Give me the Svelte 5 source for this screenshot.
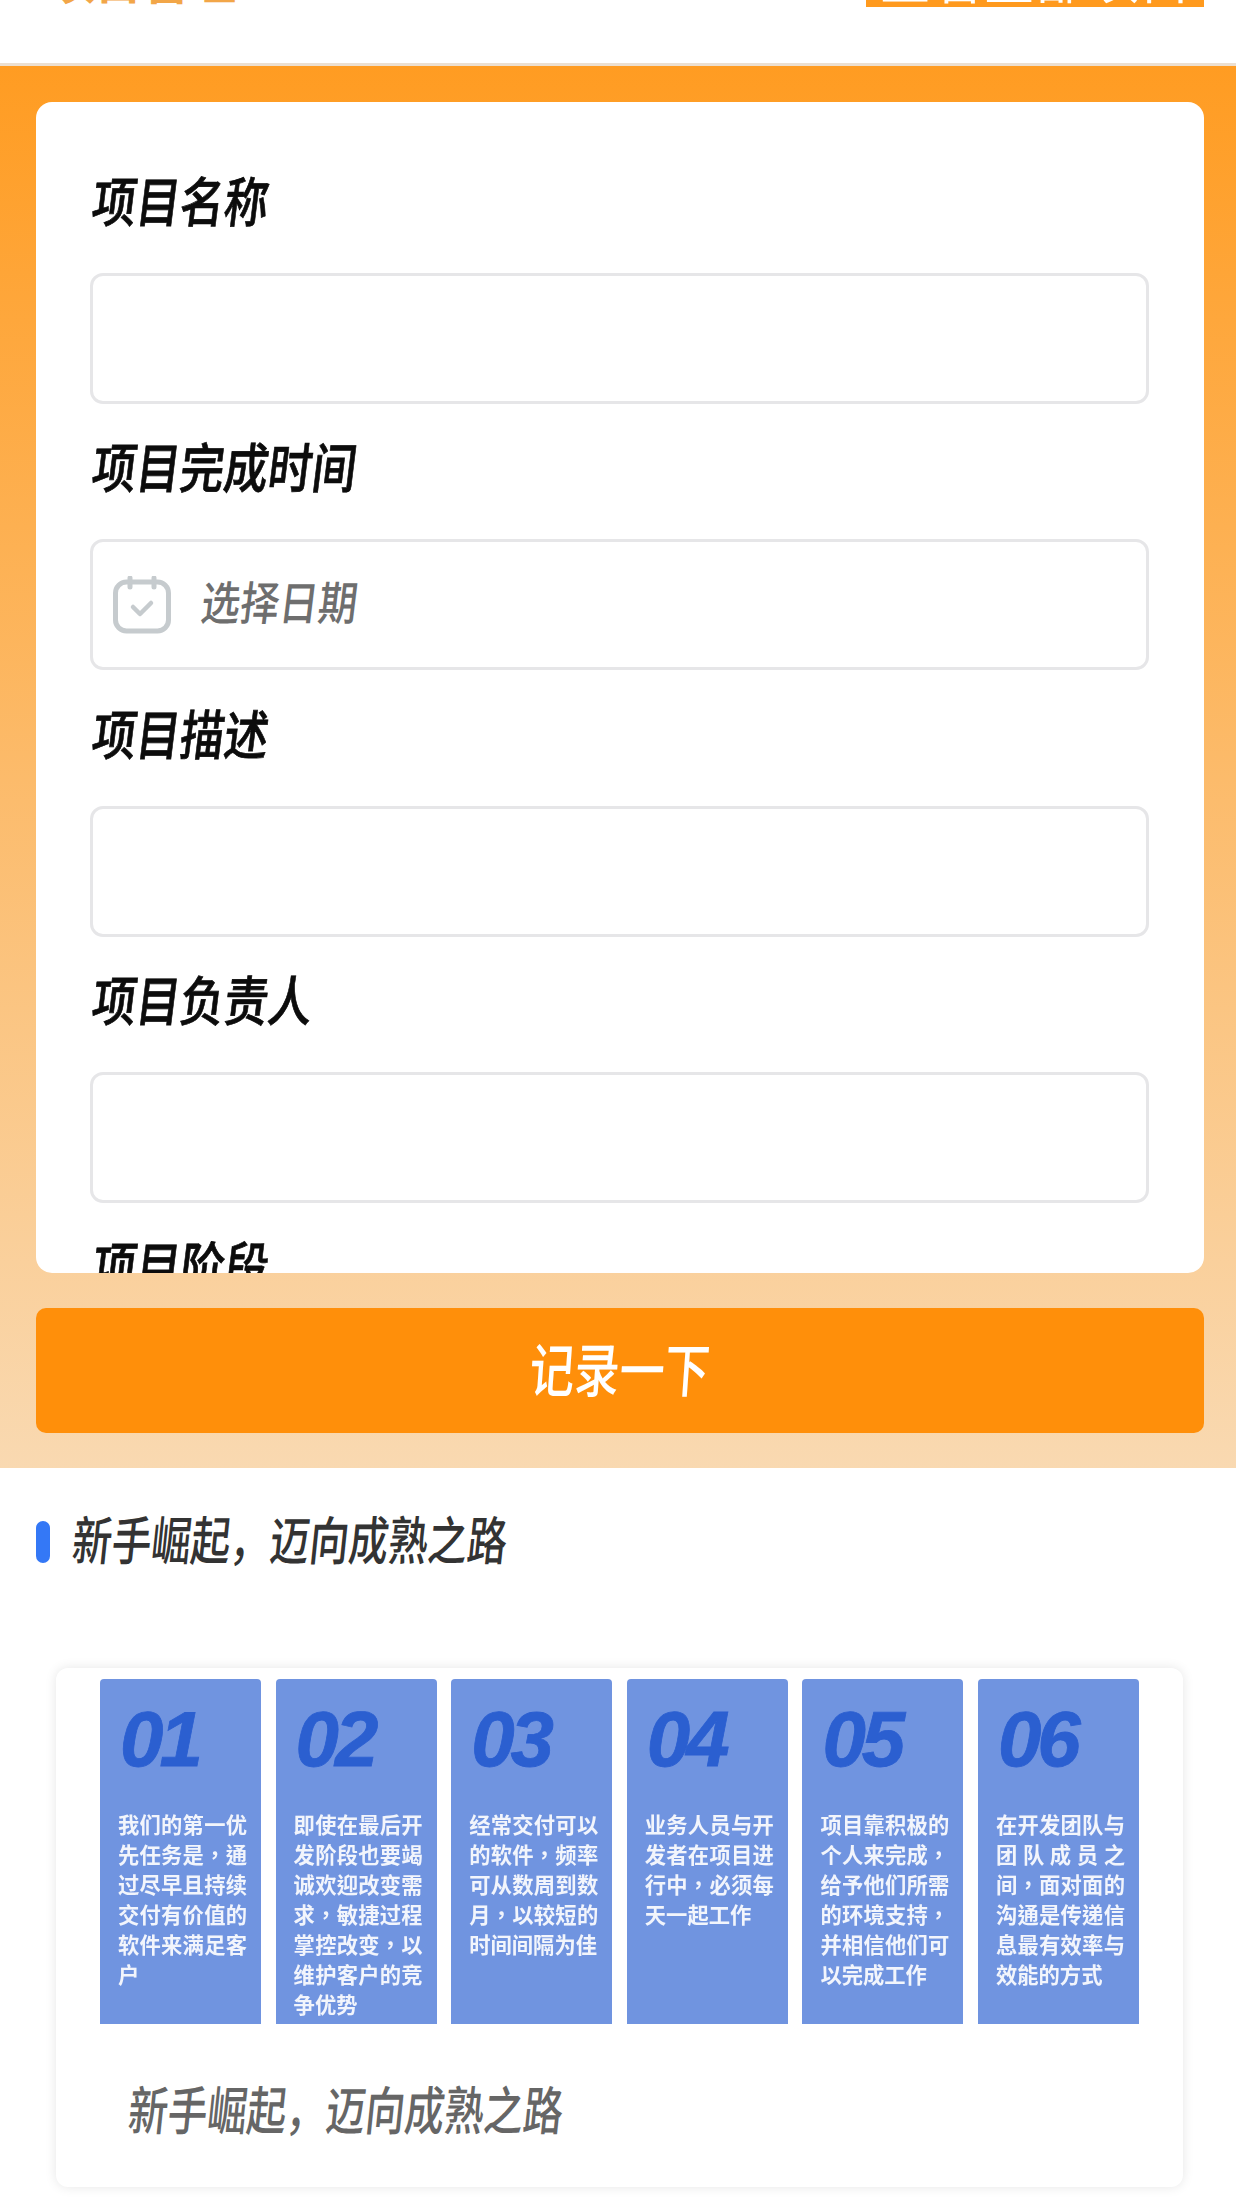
<script>
  const fields = [
    { label: '项目名称' },
    { label: '项目完成时间', date: true },
    { label: '项目描述' },
    { label: '项目负责人' }
  ]

  const steps = [
    { no: '01', text: '我们的第一优先任务是，通过尽早且持续交付有价值的软件来满足客户' },
    { no: '02', text: '即使在最后开发阶段也要竭诚欢迎改变需求，敏捷过程掌控改变，以维护客户的竞争优势' },
    { no: '03', text: '经常交付可以的软件，频率可从数周到数月，以较短的时间间隔为佳' },
    { no: '04', text: '业务人员与开发者在项目进行中，必须每天一起工作' },
    { no: '05', text: '项目靠积极的个人来完成，给予他们所需的环境支持，并相信他们可以完成工作' },
    { no: '06', text: '在开发团队与团队成员之间，面对面的沟通是传递信息最有效率与效能的方式' }
  ]
</script>

<div class="page">
  <header class="top">
    <span class="brand">项目管理</span>
    <span class="top-btn">查看全部项目</span>
  </header>

  <section class="hero">
    <div class="form">
      {#each fields as field}
        <div class="field">
          <div class="label">{field.label}</div>
          <div class="input">
            {#if field.date}
              <svg class="cal" viewBox="0 0 58 58" width="58" height="58" fill="none" stroke="#c6cbce" stroke-linecap="round" stroke-linejoin="round">
                <rect x="2.5" y="6" width="53" height="49" rx="11" stroke-width="5" />
                <path d="M17 2v9M41 2v9" stroke-width="5" />
                <path d="M20 31l7 7 11-11" stroke-width="4.5" />
              </svg>
              <span class="placeholder">选择日期</span>
            {/if}
          </div>
        </div>
      {/each}
      <div class="label">项目阶段</div>
    </div>
    <button class="submit"><span>记录一下</span></button>
  </section>

  <section class="lesson">
    <h2 class="title"><span class="bar"></span><span class="stretch">新手崛起，迈向成熟之路</span></h2>
    <div class="card">
      <div class="poster">
        {#each steps as step}
          <div class="step">
            <div class="no">{step.no}</div>
            <p>{step.text}</p>
          </div>
        {/each}
      </div>
      <div class="caption"><span class="stretch">新手崛起，迈向成熟之路</span></div>
    </div>
  </section>
</div>

<style>
  :global(body) {
    background: #fff;
    font-family: "Noto Sans CJK SC", "Liberation Sans", sans-serif;
  }

  .page {
    height: 2199px;
    overflow: hidden;
  }

  .top {
    height: 66px;
    box-sizing: border-box;
    padding: 0 32px 0 48px;
    display: flex;
    justify-content: space-between;
    align-items: flex-start;
    overflow: hidden;
    border-bottom: 3px solid #ecdfd0;
  }

  .brand {
    margin-top: -44px;
    font-size: 47px;
    line-height: 46px;
    color: #f2a648;
    font-weight: 700;
  }

  .top-btn {
    margin-top: -42px;
    height: 49px;
    width: 338px;
    background: #ff9a1e;
    color: #fff;
    font-size: 52px;
    line-height: 37px;
    text-align: center;
    white-space: nowrap;
    overflow: hidden;
  }

  .hero {
    height: 1402px;
    box-sizing: border-box;
    padding: 36px 32px 0 36px;
    background: linear-gradient(#ff9c22, #f9d9b1);
  }

  .form {
    height: 1171px;
    box-sizing: border-box;
    padding: 62px 55px 0 54px;
    background: #fff;
    border-radius: 16px;
    overflow: hidden;
  }

  .field {
    height: 266.3px;
  }

  .label {
    height: 109px;
    padding-left: 3px;
    font-size: 44px;
    line-height: 70px;
    font-weight: 500;
    -webkit-text-stroke: 0.6px #0c0c0c;
    color: #0c0c0c;
    transform: skewX(-7deg) scaleY(1.22);
    transform-origin: 0 35px;
  }

  .input {
    height: 131px;
    box-sizing: border-box;
    border: 3px solid #e6e6e8;
    border-radius: 13px;
    display: flex;
    align-items: center;
    padding-left: 20px;
    gap: 31px;
  }

  .cal {
    flex: none;
  }

  .placeholder {
    margin-top: -10px;
    font-size: 39px;
    font-weight: 500;
    color: #6e6e6e;
    transform: skewX(-7deg) scaleY(1.18);
  }

  .submit {
    display: block;
    width: 100%;
    height: 125px;
    margin-top: 35px;
    padding: 0 0 8px;
    border: none;
    border-radius: 10px;
    background: #ff8f0a;
    color: #fff;
    font-family: inherit;
    font-size: 45px;
    font-weight: 500;
  }

  .submit span {
    display: block;
    transform: skewX(-4deg) scaleY(1.3);
  }

  .lesson {
    padding: 45px 0 0 36px;
  }

  .title {
    margin: 0;
    height: 155px;
    display: flex;
    align-items: flex-start;
    gap: 23px;
    font-size: 39.5px;
    line-height: 50px;
    font-weight: 500;
    color: #333;
  }

  .bar {
    flex: none;
    width: 14px;
    height: 42px;
    margin-top: 8px;
    border-radius: 7px;
    background: #3478f6;
  }

  .stretch {
    display: block;
    transform: skewX(-6deg) scaleY(1.32);
    transform-origin: 0 50%;
  }

  .card {
    width: 1127px;
    height: 519px;
    box-sizing: border-box;
    margin-left: 20px;
    padding-top: 11px;
    background: #fff;
    border-radius: 12px;
    box-shadow: 0 0 12px rgba(0, 0, 0, 0.1);
  }

  .poster {
    display: flex;
    gap: 14.6px;
    margin-left: 44px;
    height: 345px;
  }

  .step {
    width: 161px;
    box-sizing: border-box;
    padding: 22px 14px 0 18px;
    background: #7094e0;
    border-radius: 4px 4px 0 0;
    overflow: hidden;
  }

  .no {
    height: 108px;
    font-family: "Liberation Sans", sans-serif;
    font-size: 78px;
    line-height: 76px;
    font-weight: 700;
    font-style: italic;
    letter-spacing: -4px;
    -webkit-text-stroke: 0.8px #2b5fd0;
    color: #2b5fd0;
    margin-left: 2px;
    filter: blur(0.7px);
  }

  .step p {
    margin: 0;
    font-family: "Noto Sans CJK TC", sans-serif;
    font-size: 21.3px;
    line-height: 30px;
    font-weight: 700;
    text-align: justify;
    color: #f2f5fc;
    filter: blur(0.5px);
  }

  .caption {
    padding: 56px 0 0 73px;
    font-size: 39.5px;
    line-height: 56px;
    font-weight: 500;
    color: #666;
  }
</style>
